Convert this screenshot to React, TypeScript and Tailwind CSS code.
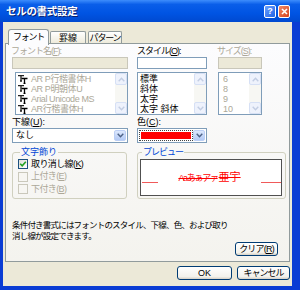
import type { ReactNode } from 'react';

const Acc = ({ c }: { c: string }) => <span className="underline underline-offset-[1px]">{c}</span>;

const Chevron = ({ up = false, color = '#4d6185' }: { up?: boolean; color?: string }) => (
  <svg width="7" height="5" viewBox="0 0 7 5" className={up ? 'rotate-180' : ''}>
    <path d="M0.7 0.8 L3.5 3.8 L6.3 0.8" fill="none" stroke={color} strokeWidth="1.4" />
  </svg>
);

const ScrollBtn = ({ up }: { up?: boolean }) => (
  <div className="h-[12px] flex items-center justify-center bg-[#eef2fc] border border-[#d6e0f5] rounded-[2px]">
    <Chevron up={up} color="#c2cde3" />
  </div>
);

// TrueType font mark
const TT = () => (
  <svg width="10" height="9" viewBox="0 0 10 9" className="mr-[3px] shrink-0">
    <path d="M0 0.5 H6 M3 0.5 V6 M2 6 H4" stroke="#222" strokeWidth="1.3" fill="none" />
    <path d="M3.5 3.5 H9.5 M6.5 3.5 V8.5 M5.5 8.5 H7.5" stroke="#000" strokeWidth="1.3" fill="none" />
  </svg>
);

const ListBox = ({
  items,
  className = '',
  textClass = '',
  icon = false,
}: {
  items: string[];
  className?: string;
  textClass?: string;
  icon?: boolean;
}) => (
  <div className={`h-[43px] border border-[#7f9db9] bg-white flex ${className}`}>
    <div className="flex-1 flex flex-col pl-[2px] pt-[1px] overflow-hidden">
      {items.map((i) => (
        <div key={i} className={`h-[10px] leading-[10px] flex items-center whitespace-nowrap ${textClass}`}>
          {icon && <TT />}
          {i}
        </div>
      ))}
    </div>
    <div className="w-[12px] flex flex-col justify-between bg-[#f7f7f3]">
      <ScrollBtn up />
      <ScrollBtn />
    </div>
  </div>
);

const Combo = ({ children, className = '' }: { children: ReactNode; className?: string }) => (
  <div className={`h-[15px] border border-[#7f9db9] bg-white flex p-px ${className}`}>
    <div className="flex-1 flex items-center min-w-0">{children}</div>
    <div className="w-[12px] rounded-[2px] bg-[linear-gradient(#dce8fd,#b3c9f5)] border border-[#bccff5] flex items-center justify-center">
      <Chevron />
    </div>
  </div>
);

const Check = ({ checked = false, disabled = false, children }: { checked?: boolean; disabled?: boolean; children: ReactNode }) => (
  <div className="flex items-center h-[12.5px]">
    <div
      className={`w-[10px] h-[10px] border flex items-center justify-center ${
        disabled ? 'border-[#cac8bb] bg-[#f7f6f2]' : 'border-[#1c5180] bg-[linear-gradient(135deg,#dcdcd7,#ffffff)]'
      }`}
    >
      {checked && (
        <svg width="8" height="8" viewBox="0 0 8 8">
          <path d="M1.2 3.8 L3.2 5.8 L6.8 1.8" fill="none" stroke="#21a121" strokeWidth="1.6" />
        </svg>
      )}
    </div>
    <span className={`ml-[3px] tracking-[-0.6px] ${disabled ? 'text-[#aca899]' : ''}`}>{children}</span>
  </div>
);

const XPButton = ({ children, className = '' }: { children: ReactNode; className?: string }) => (
  <div
    className={`h-[14px] rounded-[3px] border border-[#003c74] bg-[linear-gradient(#ffffff,#f3f2ec_80%,#d6d0c5)] flex items-center justify-center ${className}`}
  >
    {children}
  </div>
);

export default function App() {
  return (
    <div className="w-[300px] h-[290px] bg-[#0a3cd4] flex flex-col overflow-hidden font-['Liberation_Sans','Noto_Sans_CJK_JP',sans-serif] text-[9px] leading-none text-black">
      {/* title bar */}
      <div className="h-[22px] shrink-0 flex items-center pl-[6px] pr-[10px] bg-[linear-gradient(180deg,#3d8dfc_0%,#0a5ee9_20%,#0054e3_60%,#0049d0_100%)]">
        <span className="flex-1 text-white font-bold text-[10.5px] tracking-[-0.3px] [text-shadow:1px_1px_0_#0a1e6e]">
          セルの書式設定
        </span>
        <div className="w-[12px] h-[13px] rounded-[2px] border border-white bg-[linear-gradient(135deg,#6aa0ff,#2163e6)] flex items-center justify-center text-white font-bold text-[9px]">
          ?
        </div>
        <div className="w-[12px] h-[13px] ml-[2px] rounded-[2px] border border-white bg-[linear-gradient(135deg,#f08a68,#d6431c)] flex items-center justify-center">
          <svg width="7" height="7" viewBox="0 0 7 7">
            <path d="M1 1 L6 6 M6 1 L1 6" stroke="white" strokeWidth="1.6" />
          </svg>
        </div>
      </div>

      {/* body */}
      <div className="flex-1 ml-[3px] mr-[8px] mb-[4px] bg-[#ece9d8] flex flex-col">
        {/* tabs */}
        <div className="flex items-start pt-[7px] pl-[5px] h-[22px]">
          <div className="relative z-10 w-[41px] h-[16px] border border-b-0 border-[#919b9c] rounded-t-[3px] bg-[#fcfcfe] flex items-center justify-center tracking-[-1.2px]">
            フォント
          </div>
          <div className="mt-[2px] ml-[1px] w-[36px] h-[13px] border border-b-0 border-[#919b9c] rounded-t-[2px] bg-[linear-gradient(#ffffff,#ece9d8)] flex items-center justify-center">
            罫線
          </div>
          <div className="mt-[2px] ml-[2px] w-[34px] h-[13px] border border-b-0 border-[#919b9c] rounded-t-[2px] bg-[linear-gradient(#ffffff,#ece9d8)] flex items-center justify-center tracking-[-1.2px]">
            パターン
          </div>
        </div>

        {/* panel */}
        <div className="-mt-px mx-[2px] h-[219px] border border-[#919b9c] bg-[linear-gradient(#fcfcfe,#f4f3ee)] flex flex-col pl-[6px] pt-[2px]">
          <div className="flex">
            <div className="w-[116px] flex flex-col">
              <div className="h-[11px] leading-[11px] -ml-[1px] text-[#aca899] tracking-[-1px]">
                フォント名(<Acc c="F" />):
              </div>
              <div className="h-[12px] border border-[#c9c7ba] bg-[#ece9d8]" />
              <ListBox
                className="mt-[3px] ml-[3px]"
                textClass="text-[#aca899] tracking-[-0.4px]"
                icon
                items={['AR P行楷書体H', 'AR P明朝体U', 'Arial Unicode MS', 'AR行楷書体H']}
              />
            </div>
            <div className="w-[70px] ml-[9px] flex flex-col">
              <div className="h-[11px] leading-[11px] tracking-[-1px]">
                スタイル(<Acc c="O" />):
              </div>
              <div className="h-[12px] border border-[#7f9db9] bg-white" />
              <ListBox className="mt-[3px]" items={['標準', '斜体', '太字', '太字 斜体']} />
            </div>
            <div className="w-[44px] ml-[11px] flex flex-col">
              <div className="h-[11px] leading-[11px] -ml-[1px] text-[#aca899] tracking-[-1px] whitespace-nowrap">
                サイズ(<Acc c="S" />):
              </div>
              <div className="h-[12px] border border-[#c9c7ba] bg-[#ece9d8]" />
              <ListBox className="mt-[3px]" textClass="text-[#aca899] pl-[2px]" items={['6', '8', '9', '10']} />
            </div>
          </div>

          <div className="flex mt-[2px]">
            <div className="w-[116px] flex flex-col">
              <div className="h-[11px] leading-[11px]">
                下線(<Acc c="U" />):
              </div>
              <Combo>
                <span className="pl-[2px]">なし</span>
              </Combo>
            </div>
            <div className="w-[70px] ml-[9px] flex flex-col">
              <div className="h-[11px] leading-[11px]">
                色(<Acc c="C" />):
              </div>
              <Combo>
                <div className="h-full w-full border border-dotted border-[#444] p-px">
                  <div className="h-full w-full bg-[#ff0000]" />
                </div>
              </Combo>
            </div>
          </div>

          <div className="flex mt-[4px]">
            <fieldset className="w-[115px] h-[52px] border border-[#d0d0bf] rounded-[3px] pl-[5px] pt-[1px]">
              <legend className="ml-[2px] px-[1px] text-[#0046d5] leading-[10px]">文字飾り</legend>
              <Check checked>
                取り消し線(<Acc c="K" />)
              </Check>
              <Check disabled>
                上付き(<Acc c="E" />)
              </Check>
              <Check disabled>
                下付き(<Acc c="B" />)
              </Check>
            </fieldset>
            <fieldset className="w-[149px] h-[52px] ml-[10px] border border-[#d0d0bf] rounded-[3px] pl-[2px] pr-[3px] pb-px">
              <legend className="ml-[2px] px-[1px] text-[#0046d5] leading-[10px] tracking-[-1px]">プレビュー</legend>
              <div className="h-[37px] mt-[2px] bg-white border border-[#505050] flex items-center">
                <div className="w-[16px] h-px bg-[#f05a5a] mt-[9px] ml-px" />
                <div className="flex-1 flex items-baseline justify-center text-[#ff0000] line-through">
                  <span className="text-[9px] tracking-[-1.3px]">Aaあぁアァ</span>
                  <span className="text-[11px] ml-[1px]">亜宇</span>
                </div>
                <div className="w-[20px] h-px bg-[#f05a5a] mt-[9px]" />
              </div>
            </fieldset>
          </div>

          <div className="mt-[21px] text-[8.5px] leading-[11px] tracking-[-0.8px]">
            条件付き書式にはフォントのスタイル、下線、色、および取り
            <br />
            消し線が設定できます。
          </div>
          <div className="flex justify-end pr-[11px]">
            <XPButton className="w-[43px] h-[13px] tracking-[-0.8px]">
              クリア(<Acc c="R" />)
            </XPButton>
          </div>
        </div>

        {/* dialog buttons */}
        <div className="flex justify-end gap-[5px] pr-[2px] mt-[4px]">
          <XPButton className="w-[55px]">OK</XPButton>
          <XPButton className="w-[53px] tracking-[-1px]">キャンセル</XPButton>
        </div>
      </div>
    </div>
  );
}
